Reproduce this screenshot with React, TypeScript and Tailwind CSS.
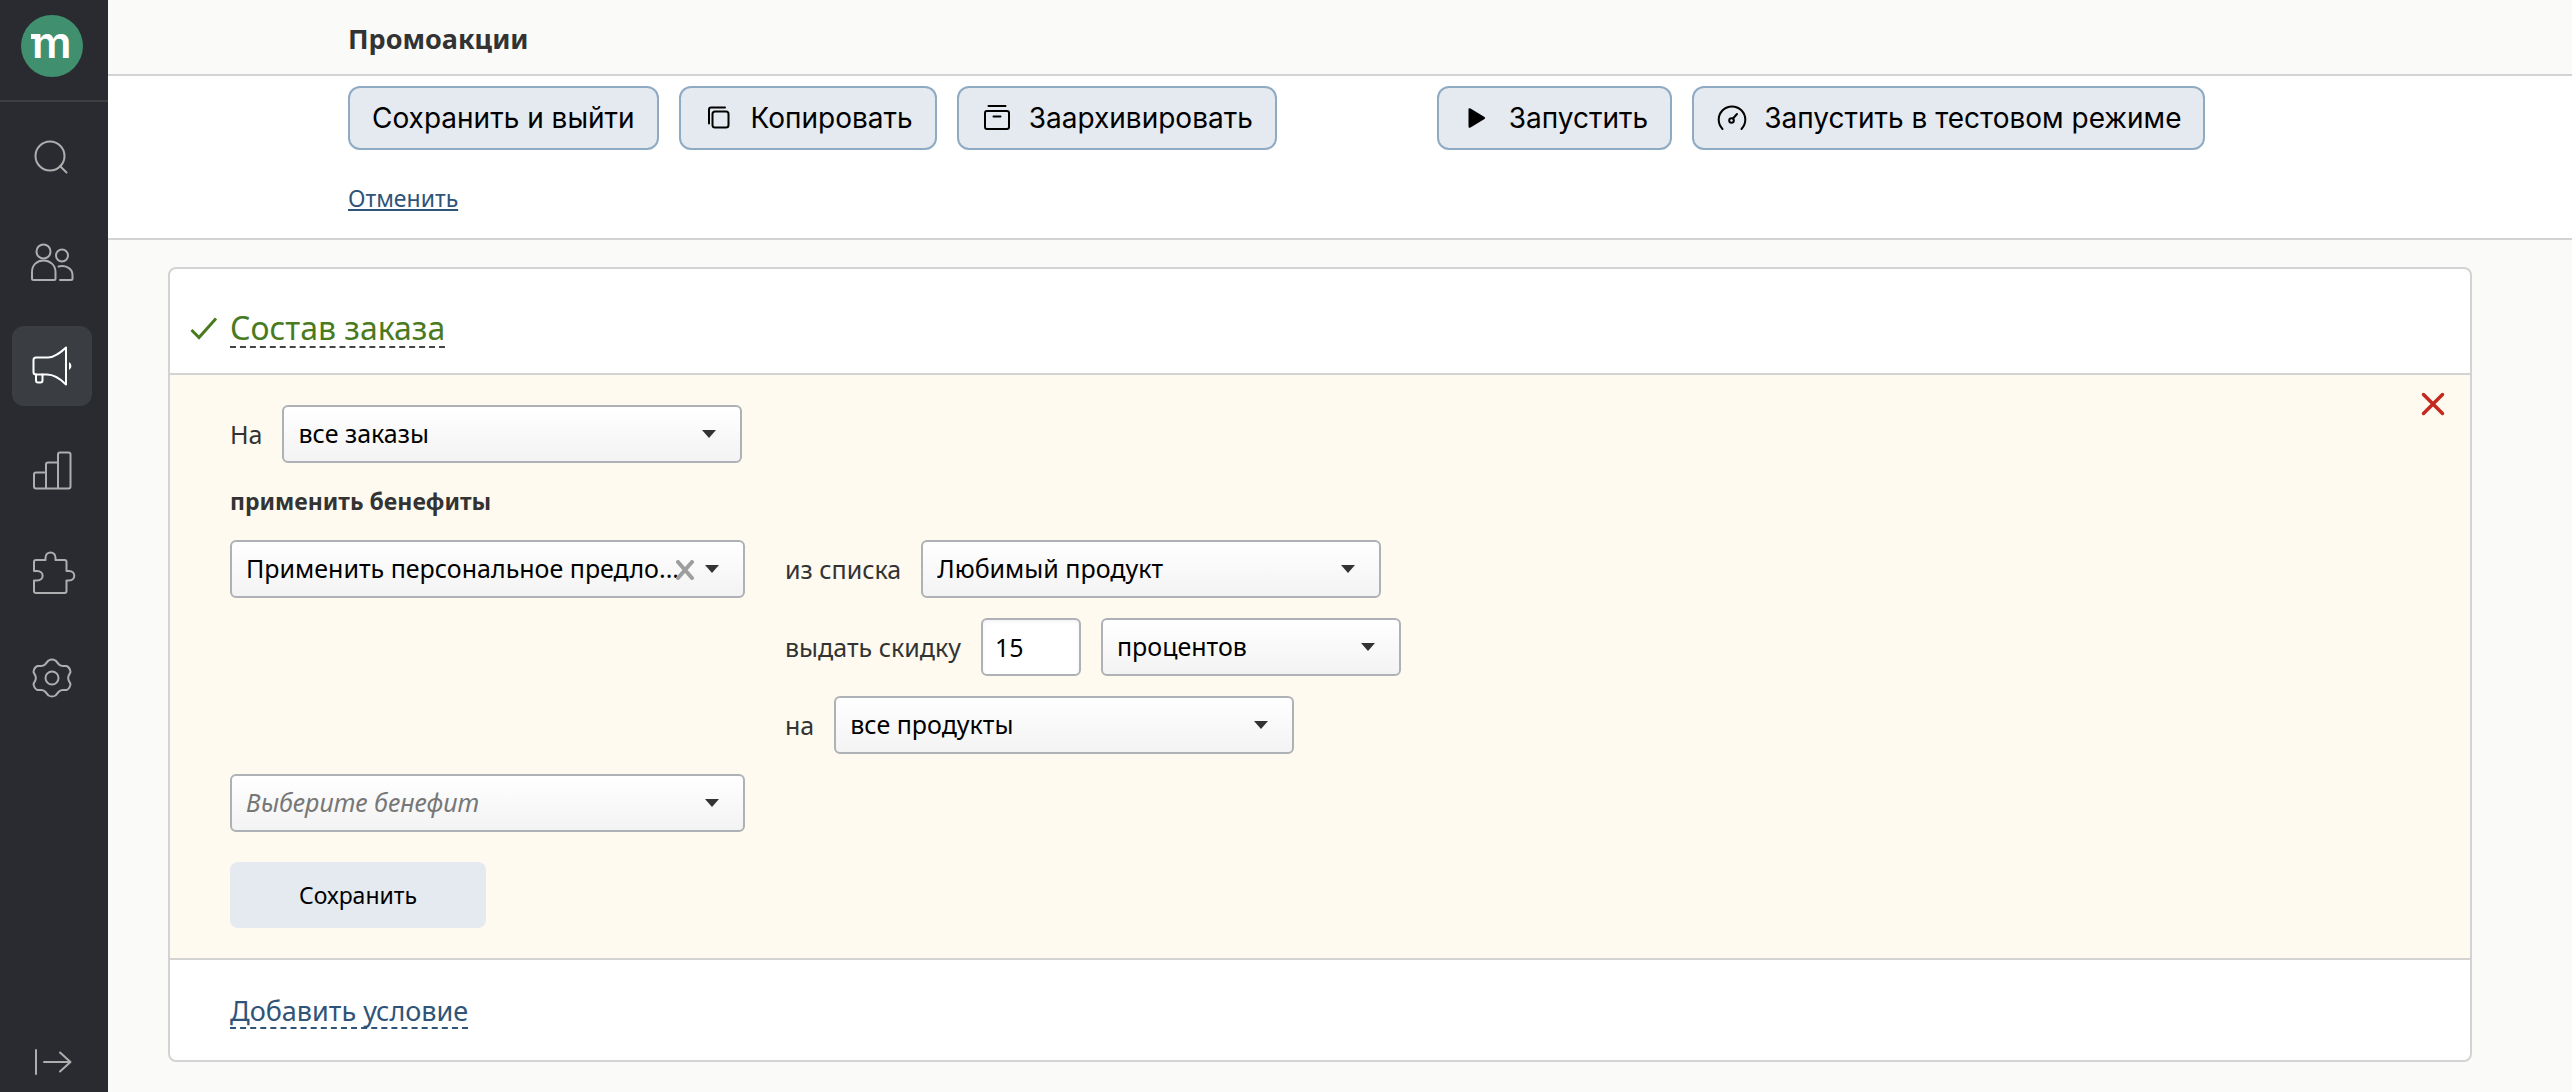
import { FC, ReactNode } from "react"
import clsx from "clsx"

interface IconProps {
    children: ReactNode
    className?: string
    size?: number
}

const Icon: FC<IconProps> = ({ children, className, size = 48 }) => (
    <svg
        viewBox={`0 0 ${size} ${size}`}
        width={size}
        height={size}
        fill="none"
        stroke="currentColor"
        strokeWidth="2"
        strokeLinecap="round"
        strokeLinejoin="round"
        aria-hidden="true"
        className={clsx("shrink-0", className)}
    >
        {children}
    </svg>
)

const navItems = [
    {
        label: "Поиск",
        icon: (
            <>
                <circle cx="22" cy="22" r="14.5" />
                <path d="M32 32l6.5 6.5" />
            </>
        ),
    },
    {
        label: "Клиенты",
        icon: (
            <>
                <circle cx="15.5" cy="13.5" r="7" />
                <circle cx="34" cy="17.5" r="6" />
                <path d="M4 34c0-7 5-11.500 11.500-11.500S27.500 27 27.500 34v6.500a1.500 1.500 0 0 1-1.500 1.500H5.500A1.500 1.500 0 0 1 4 40.500z" />
                <path d="M30.500 28.500c7-1.500 14 1.500 14 8.500v3.500a1.500 1.500 0 0 1-1.500 1.500H32" />
            </>
        ),
    },
    {
        label: "Кампании",
        active: true,
        icon: (
            <>
                <path d="M5.500 18a2.500 2.500 0 0 1 2.500-2.500h12C27 15.500 33 10 38 5.500V42.500C33 37.500 27 32.500 19 32.500H8A2.500 2.500 0 0 1 5.500 30z" />
                <path d="M8 32.500v6a2 2 0 0 0 2 2h2.500a2 2 0 0 0 2-2v-6" />
                <path d="M41 20a4.500 4.500 0 0 1 0 8z" fill="currentColor" stroke="none" />
            </>
        ),
    },
    {
        label: "Отчёты",
        icon: (
            <path d="M18 42.500H8A2 2 0 0 1 6 40.500V28.500a2 2 0 0 1 2-2h10zM18 42.500V18.500a2 2 0 0 1 2-2h10v26zM30 42.500V8.500a2 2 0 0 1 2-2h8.500a2 2 0 0 1 2 2v32a2 2 0 0 1-2 2z" />
        ),
    },
    {
        label: "Интеграции",
        icon: (
            <path d="M6 21v-9a2 2 0 0 1 2-2H17.500V8C17.500 0.500 27.500 0.500 27.500 8V10H36.500a2 2 0 0 1 2 2V21H41C48 21 48 30.500 41 30.500H38.500V41a2 2 0 0 1-2 2H8a2 2 0 0 1-2-2V30.500H9C16.500 30.500 16.500 21 9 21z" />
        ),
    },
    {
        label: "Настройки",
        icon: (
            <>
                <circle cx="24" cy="24" r="6.500" />
                <path d="M20.500 6.500Q24 4.500 27.500 6.500L31 10.500Q32.500 12 35 12H38.500Q42 13.500 42.500 18L40.500 22Q39.800 24 40.500 26L42.500 30Q42 34.500 38.500 36H35Q32.500 36 31 37.500L27.500 41.500Q24 43.500 20.500 41.500L17 37.500Q15.500 36 13 36H9.500Q6 34.500 5.500 30L7.500 26Q8.200 24 7.500 22L5.500 18Q6 13.500 9.500 12H13Q15.500 12 17 10.500Z" />
            </>
        ),
    },
]

const Logo = () => (
    <svg viewBox="0 0 64 64" className="size-16 overflow-visible" role="img" aria-label="m">
        <circle cx="32" cy="32" r="31" fill="#40906f" />
        <rect x="11" y="20" width="8" height="5" fill="#fff" />
        <text x="12" y="44" fill="#fff" fontSize="44" fontWeight="600" fontFamily="Inter, sans-serif">m</text>
    </svg>
)

const Sidebar = () => (
    <aside className="flex w-[108px] shrink-0 flex-col bg-[#2a2b30] text-[#aeaeb0]">
        <a href="#" className="flex h-[102px] border-b-2 border-[#3c3e42] pt-3.5 pl-5">
            <Logo />
        </a>
        <nav className="flex flex-1 flex-col gap-6 px-3 pt-4">
            {navItems.map((item) => (
                <a
                    key={item.label}
                    href="#"
                    aria-label={item.label}
                    className={clsx(
                        "flex size-20 items-center justify-center rounded-xl",
                        item.active && "bg-[#3a3d42] text-white"
                    )}
                >
                    <Icon>{item.icon}</Icon>
                </a>
            ))}
        </nav>
        <button aria-label="Развернуть меню" className="flex h-[60px] w-[104px] items-center justify-center">
            <Icon>
                <path d="M8 12v24M16 24h26M32 14.500L42.500 24L32 33.500" />
            </Icon>
        </button>
    </aside>
)

interface ToolButtonProps {
    text: string
    icon?: ReactNode
}

const ToolButton: FC<ToolButtonProps> = ({ text, icon }) => (
    <button className="flex h-16 items-center gap-4 rounded-xl border-2 border-[#8fabc4] bg-[#e5e9f0] px-[22px] font-[Inter,sans-serif] text-[28px] whitespace-nowrap text-black">
        {icon && <Icon size={32}>{icon}</Icon>}
        {text}
    </button>
)

const copyIcon = (
    <>
        <rect x="9.500" y="9.500" width="16" height="16" rx="2.500" />
        <path d="M6 21.500V7.500A2 2 0 0 1 8 5.500H22" />
    </>
)

const archiveIcon = (
    <>
        <rect x="4" y="9" width="24" height="18" rx="2" />
        <path d="M7.500 4H24.500M12.500 14.500H19.500" />
    </>
)

const playIcon = (
    <path d="M7.500 7.500Q7.500 5.500 9.500 6.500L23.500 15Q25 16 23.500 17L9.500 25.500Q7.500 26.500 7.500 24.500Z" fill="currentColor" stroke="none" />
)

const gaugeIcon = (
    <>
        <path d="M6.500 27A13.300 13.300 0 1 1 25.500 27" />
        <circle cx="15.500" cy="18.500" r="2.300" />
        <path d="M17 16.500L21 12" />
    </>
)

interface SelectProps {
    value: string
    id: string
    label?: string
    ariaLabel?: string
    className?: string
    placeholder?: boolean
    clearable?: boolean
}

const Select: FC<SelectProps> = ({ value, id, label, ariaLabel, className, placeholder, clearable }) => (
    <div className="flex items-center gap-5">
        {label && <label htmlFor={id} className="pt-0.5 whitespace-nowrap">{label}</label>}
        <div className={clsx("relative", className)}>
            <select
                id={id}
                aria-label={ariaLabel}
                className={clsx(
                    "block h-[58px] w-full appearance-none rounded-md border-2 border-[#aeb1b5] bg-linear-to-b from-white to-[#f3f3f3] pl-3.5",
                    placeholder ? "text-[#777] italic" : "text-black"
                )}
            >
                <option>{value}</option>
            </select>
            {clearable && (
                <button aria-label="Очистить" className="absolute top-5 right-[50px] text-[#9e9e9e]">
                    <svg viewBox="0 0 20 20" className="size-5" stroke="currentColor" strokeWidth="4" strokeLinecap="round">
                        <path d="M3 2l14 16M17 2L3 18" />
                    </svg>
                </button>
            )}
            <svg viewBox="0 0 14 8" className="pointer-events-none absolute top-[25px] right-[26px] h-2 w-3.5" fill="#333">
                <path d="M0 0h14L7 8z" />
            </svg>
        </div>
    </div>
)

const OrderPanel = () => (
    <section className="mt-[27px] mr-[100px] ml-[60px] rounded-lg border-2 border-[#d3d3d3] bg-white">
        <div className="flex h-[104px] items-center pt-4 pl-5">
            <svg viewBox="0 0 28 24" className="mr-3 h-6 w-7" fill="none" stroke="#4a7a1e" strokeWidth="3">
                <path d="M1.500 13L9 20.500L26 1.500" />
            </svg>
            <a href="#" className="border-b-2 border-dashed border-[#444] text-[32px] leading-9 text-[#4a7a1e]">
                Состав заказа
            </a>
        </div>

        <div className="relative flex flex-col items-start border-y-2 border-[#d3d3d3] bg-[#fefaef] px-[60px] py-[30px]">
            <button aria-label="Удалить" className="absolute top-[15px] right-[23px] text-[#c4291f]">
                <svg viewBox="0 0 28 28" className="size-7" stroke="currentColor" strokeWidth="3.5" strokeLinecap="round">
                    <path d="M4.500 4.500l19 19M23.500 4.500l-19 19" />
                </svg>
            </button>

            <Select id="orders" label="На" value="все заказы" className="w-[460px]" />

            <h2 className="my-5 text-[23px] leading-[37px] font-bold">применить бенефиты</h2>

            <div className="flex items-start gap-10">
                <Select id="benefit" ariaLabel="Бенефит" value="Применить персональное предло..." className="w-[515px]" clearable />
                <div className="flex flex-col gap-5">
                    <Select id="list" label="из списка" value="Любимый продукт" className="w-[460px]" />
                    <div className="flex items-center gap-5">
                        <label htmlFor="discount" className="pt-0.5">выдать скидку</label>
                        <input
                            id="discount"
                            defaultValue="15"
                            className="h-[58px] w-[100px] rounded-md border-2 border-[#aeb1b5] bg-white px-3 text-black inset-shadow-sm"
                        />
                        <Select id="unit" ariaLabel="Единица" value="процентов" className="w-[300px]" />
                    </div>
                    <Select id="products" label="на" value="все продукты" className="w-[460px]" />
                </div>
            </div>

            <div className="mt-5">
                <Select id="new-benefit" ariaLabel="Новый бенефит" value="Выберите бенефит" className="w-[515px]" placeholder />
            </div>

            <button className="mt-[30px] h-[66px] w-64 rounded-lg bg-[#e5e9f0] text-[23px] text-black">Сохранить</button>
        </div>

        <div className="flex h-[100px] items-center pt-1 pl-[60px]">
            <a href="#" className="border-b-2 border-dashed border-[#2f5478] text-[27px] leading-8 text-[#2f5478]">
                Добавить условие
            </a>
        </div>
    </section>
)

export default function App() {
    return (
        <div className="flex min-h-screen bg-[#fafaf8] font-['Noto_Sans',sans-serif] text-[25px] text-[#333]">
            <Sidebar />
            <main className="min-w-0 flex-1">
                <header className="flex h-[76px] items-center border-b-2 border-[#d3d3d3] pt-1 pl-60">
                    <h1 className="text-[27px] font-bold">Промоакции</h1>
                </header>

                <div className="border-b-2 border-[#d3d3d3] bg-white pt-2.5 pb-6 pl-60">
                    <div className="flex gap-5">
                        <ToolButton text="Сохранить и выйти" />
                        <ToolButton text="Копировать" icon={copyIcon} />
                        <ToolButton text="Заархивировать" icon={archiveIcon} />
                        <div className="ml-[140px] flex gap-5">
                            <ToolButton text="Запустить" icon={playIcon} />
                            <ToolButton text="Запустить в тестовом режиме" icon={gaugeIcon} />
                        </div>
                    </div>
                    <a href="#" className="mt-8 block w-fit text-[23px] leading-8 text-[#2f5478] underline">Отменить</a>
                </div>

                <OrderPanel />
            </main>
        </div>
    )
}
